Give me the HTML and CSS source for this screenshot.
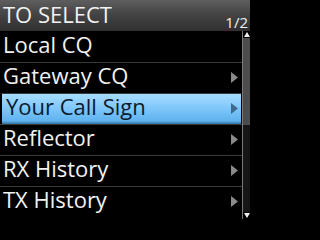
FILE: index.html
```html
<!DOCTYPE html>
<html>
<head>
<meta charset="utf-8">
<link rel="stylesheet" href="styles.css">
</head>
<body>
<div class="screen">
  <div class="header">
    <span class="title">TO SELECT</span>
    <span class="page">1/2</span>
  </div>
  <div class="main">
    <div class="list">
      <div class="row first"><span class="label">Local CQ</span></div>
      <div class="row"><span class="label">Gateway CQ</span><svg class="arrow" width="7" height="11" viewBox="0 0 7 11"><polygon points="0,0 7,5.5 0,11"/></svg></div>
      <div class="row sel"><span class="label">Your Call Sign</span><svg class="arrow" width="7" height="11" viewBox="0 0 7 11"><polygon points="0,0 7,5.5 0,11"/></svg></div>
      <div class="row"><span class="label">Reflector</span><svg class="arrow" width="7" height="11" viewBox="0 0 7 11"><polygon points="0,0 7,5.5 0,11"/></svg></div>
      <div class="row"><span class="label">RX History</span><svg class="arrow" width="7" height="11" viewBox="0 0 7 11"><polygon points="0,0 7,5.5 0,11"/></svg></div>
      <div class="row"><span class="label">TX History</span><svg class="arrow" width="7" height="11" viewBox="0 0 7 11"><polygon points="0,0 7,5.5 0,11"/></svg></div>
    </div>
    <div class="scroll">
      <div class="sbtn"><svg width="6" height="5" viewBox="0 0 6 5"><polygon points="0,5 3,0 6,5"/></svg></div>
      <div class="thumb"></div>
      <div class="track"></div>
      <div class="sbtn"><svg width="6" height="5" viewBox="0 0 6 5"><polygon points="0,0 6,0 3,5"/></svg></div>
    </div>
  </div>
</div>
</body>
</html>
```
FILE: styles.css
```css
html, body {
  margin: 0;
  padding: 0;
  background: #000;
}
.screen {
  width: 250px;
  height: 219px;
  overflow: hidden;
  background: #000;
  font-family: "Open Sans", sans-serif;
  color: #f2f2f2;
  display: flex;
  flex-direction: column;
}
.header {
  height: 31px;
  flex: none;
  box-sizing: border-box;
  display: flex;
  justify-content: space-between;
  background: linear-gradient(#5e5e5e, #444 45%, #303030);
  padding: 0 2px 0 3px;
}
.title {
  font-size: 22px;
  line-height: 25px;
  padding-top: 2px;
}
.page {
  align-self: flex-end;
  font-size: 15px;
  line-height: 18px;
}
.main {
  flex: 1;
  display: flex;
}
.list {
  flex: 1;
  display: flex;
  flex-direction: column;
}
.row {
  height: 31px;
  box-sizing: border-box;
  border-top: 1px solid #3a3a3a;
  display: flex;
  justify-content: space-between;
  align-items: center;
  padding: 0 4px 0 3px;
}
.row.first {
  border-top-color: #000;
}
.label {
  font-size: 22px;
  line-height: 25px;
  align-self: flex-start;
  white-space: nowrap;
}
.arrow {
  fill: #8a8a8a;
  margin-top: -1px;
}
.row.sel {
  border-left: 2px solid #000;
  border-right: 1px solid #000;
  padding-left: 4px;
  padding-right: 3px;
  background: linear-gradient(#a6dcff, #7cc6fa 50%, #5fb2ee 90%, #2f6f9e);
  background-clip: padding-box;
}
.row.sel .label {
  color: #0b1a2c;
}
.row.sel .arrow {
  fill: #3d6a8e;
}
.scroll {
  width: 8px;
  flex: none;
  box-sizing: border-box;
  border-left: 1px solid #7a7a7a;
  display: flex;
  flex-direction: column;
  background: #161616;
}
.sbtn {
  height: 7px;
  flex: none;
  background: #000;
  display: flex;
  align-items: center;
  justify-content: center;
  fill: #f0f0f0;
}
.thumb {
  height: 87px;
  flex: none;
  background: #4c4c4c;
}
.track {
  flex: 1;
}
```
